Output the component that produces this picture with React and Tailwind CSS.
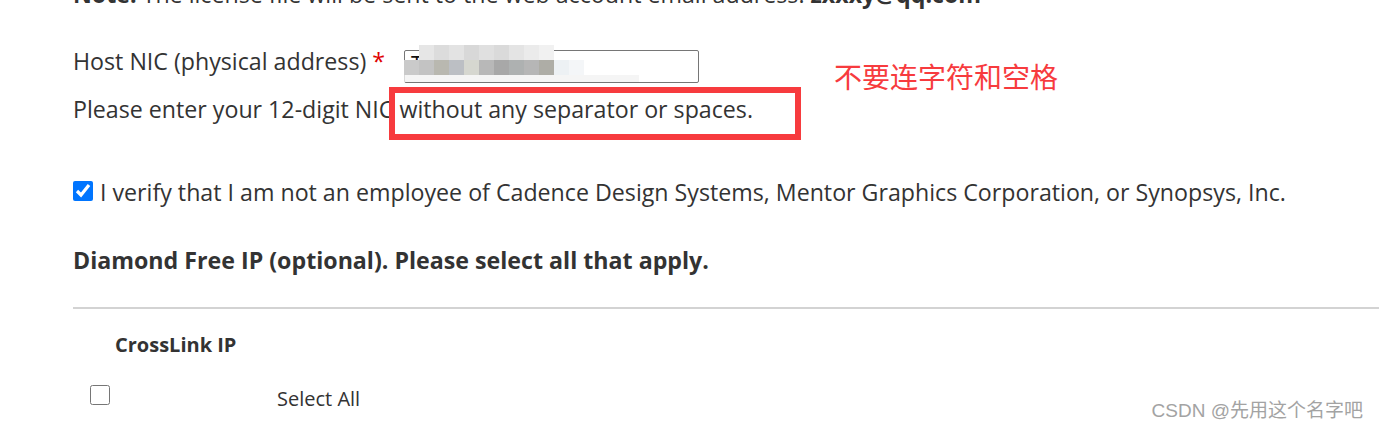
import React from 'react';

// pixelated blur over the typed address
const mosaicTop = ['#e6e6e6', '#dcdcdc', '#e3e3e3', '#d8d8d8', '#e0e0e0', '#dadada', '#e4e4e4', '#ebebeb', '#f1f1f1'];
const mosaicBottom = ['#cacaca', '#c3c3c3', '#b9b8b0', '#bcbfc4', '#d6d7d0', '#b8b8b8', '#a8a8a8', '#aeb1b1', '#b6b6b6', '#aeada6', '#edf1f4', '#f4f6f8'];

function Mosaic() {
  return (
    <div className="absolute left-[-1px] top-[-6px] flex flex-col">
      <div className="flex ml-[15px]">
        {mosaicTop.map((c, i) => (
          <div key={i} className="w-[15px] h-[15px]" style={{ backgroundColor: c }} />
        ))}
      </div>
      <div className="flex">
        {mosaicBottom.map((c, i) => (
          <div key={i} className="w-[15px] h-[15px]" style={{ backgroundColor: c }} />
        ))}
      </div>
      <div className="w-[235px] h-[7px] bg-[#f2f2f2] opacity-80" />
    </div>
  );
}

export default function App() {
  return (
    <div className="w-[1379px] h-[431px] overflow-hidden bg-white relative text-[#333333] font-['Open_Sans',sans-serif]">
      <div className="pl-[73px] pt-px">
        <p className="text-[23.2px] leading-[32px] mt-[-23px] h-[32px] whitespace-nowrap">
          <b>Note:</b> The license file will be sent to the web account email address: <b>zxxxy@qq.com</b>
        </p>

        <div className="mt-[35px] flex items-start">
          <span className="text-[23.2px] leading-[32px] whitespace-nowrap">
            Host NIC (physical address) <span className="text-[#e00000]">*</span>
          </span>
          <div className="relative mt-[5px] ml-[19px] w-[295px] h-[33px] border border-[#767676] rounded-[2px] overflow-visible">
            <span className="absolute left-[6px] top-[-2px] text-[21px] text-[#111]">T</span>
            <Mosaic />
          </div>
        </div>

        <p className="mt-[10px] text-[23.2px] leading-[32px] whitespace-nowrap">
          Please enter your 12-digit NIC without any separator or spaces.
        </p>

        <label className="mt-[51px] flex items-start gap-[7px]">
          <input type="checkbox" defaultChecked className="mt-[5px] w-[20px] h-[20px] accent-[#0075ff] m-0" />
          <span className="text-[23.2px] leading-[32px] whitespace-nowrap">
            I verify that I am not an employee of Cadence Design Systems, Mentor Graphics Corporation, or Synopsys, Inc.
          </span>
        </label>

        <h3 className="mt-[36px] text-[23.2px] leading-[32px] font-bold whitespace-nowrap">
          Diamond Free IP (optional). Please select all that apply.
        </h3>

        <div className="mt-[31px] h-[2px] bg-[#d3d3d3]" />

        <div className="pl-[42px] mt-[22px] text-[20px] leading-[28px] font-bold">CrossLink IP</div>

        <div className="mt-[26px] flex items-start">
          <input type="checkbox" className="ml-[17px] mt-0 w-[20px] h-[20px] m-0" />
          <span className="ml-[167px] text-[20px] leading-[28px]">Select All</span>
        </div>
      </div>

      <div className="absolute left-[389px] top-[87px] w-[412px] h-[53px] border-[6px] border-[#f73b3e]" />

      <div className="absolute left-[834px] top-[62px] text-[28px] leading-none text-[#f73b3e] font-['Noto_Sans_CJK_SC',sans-serif]">
        不要连字符和空格
      </div>

      <div className="absolute right-[16px] top-[401px] text-[19px] leading-none text-[#a3a3a3] font-['Liberation_Sans','Noto_Sans_CJK_SC',sans-serif]">
        CSDN @先用这个名字吧
      </div>
    </div>
  );
}
